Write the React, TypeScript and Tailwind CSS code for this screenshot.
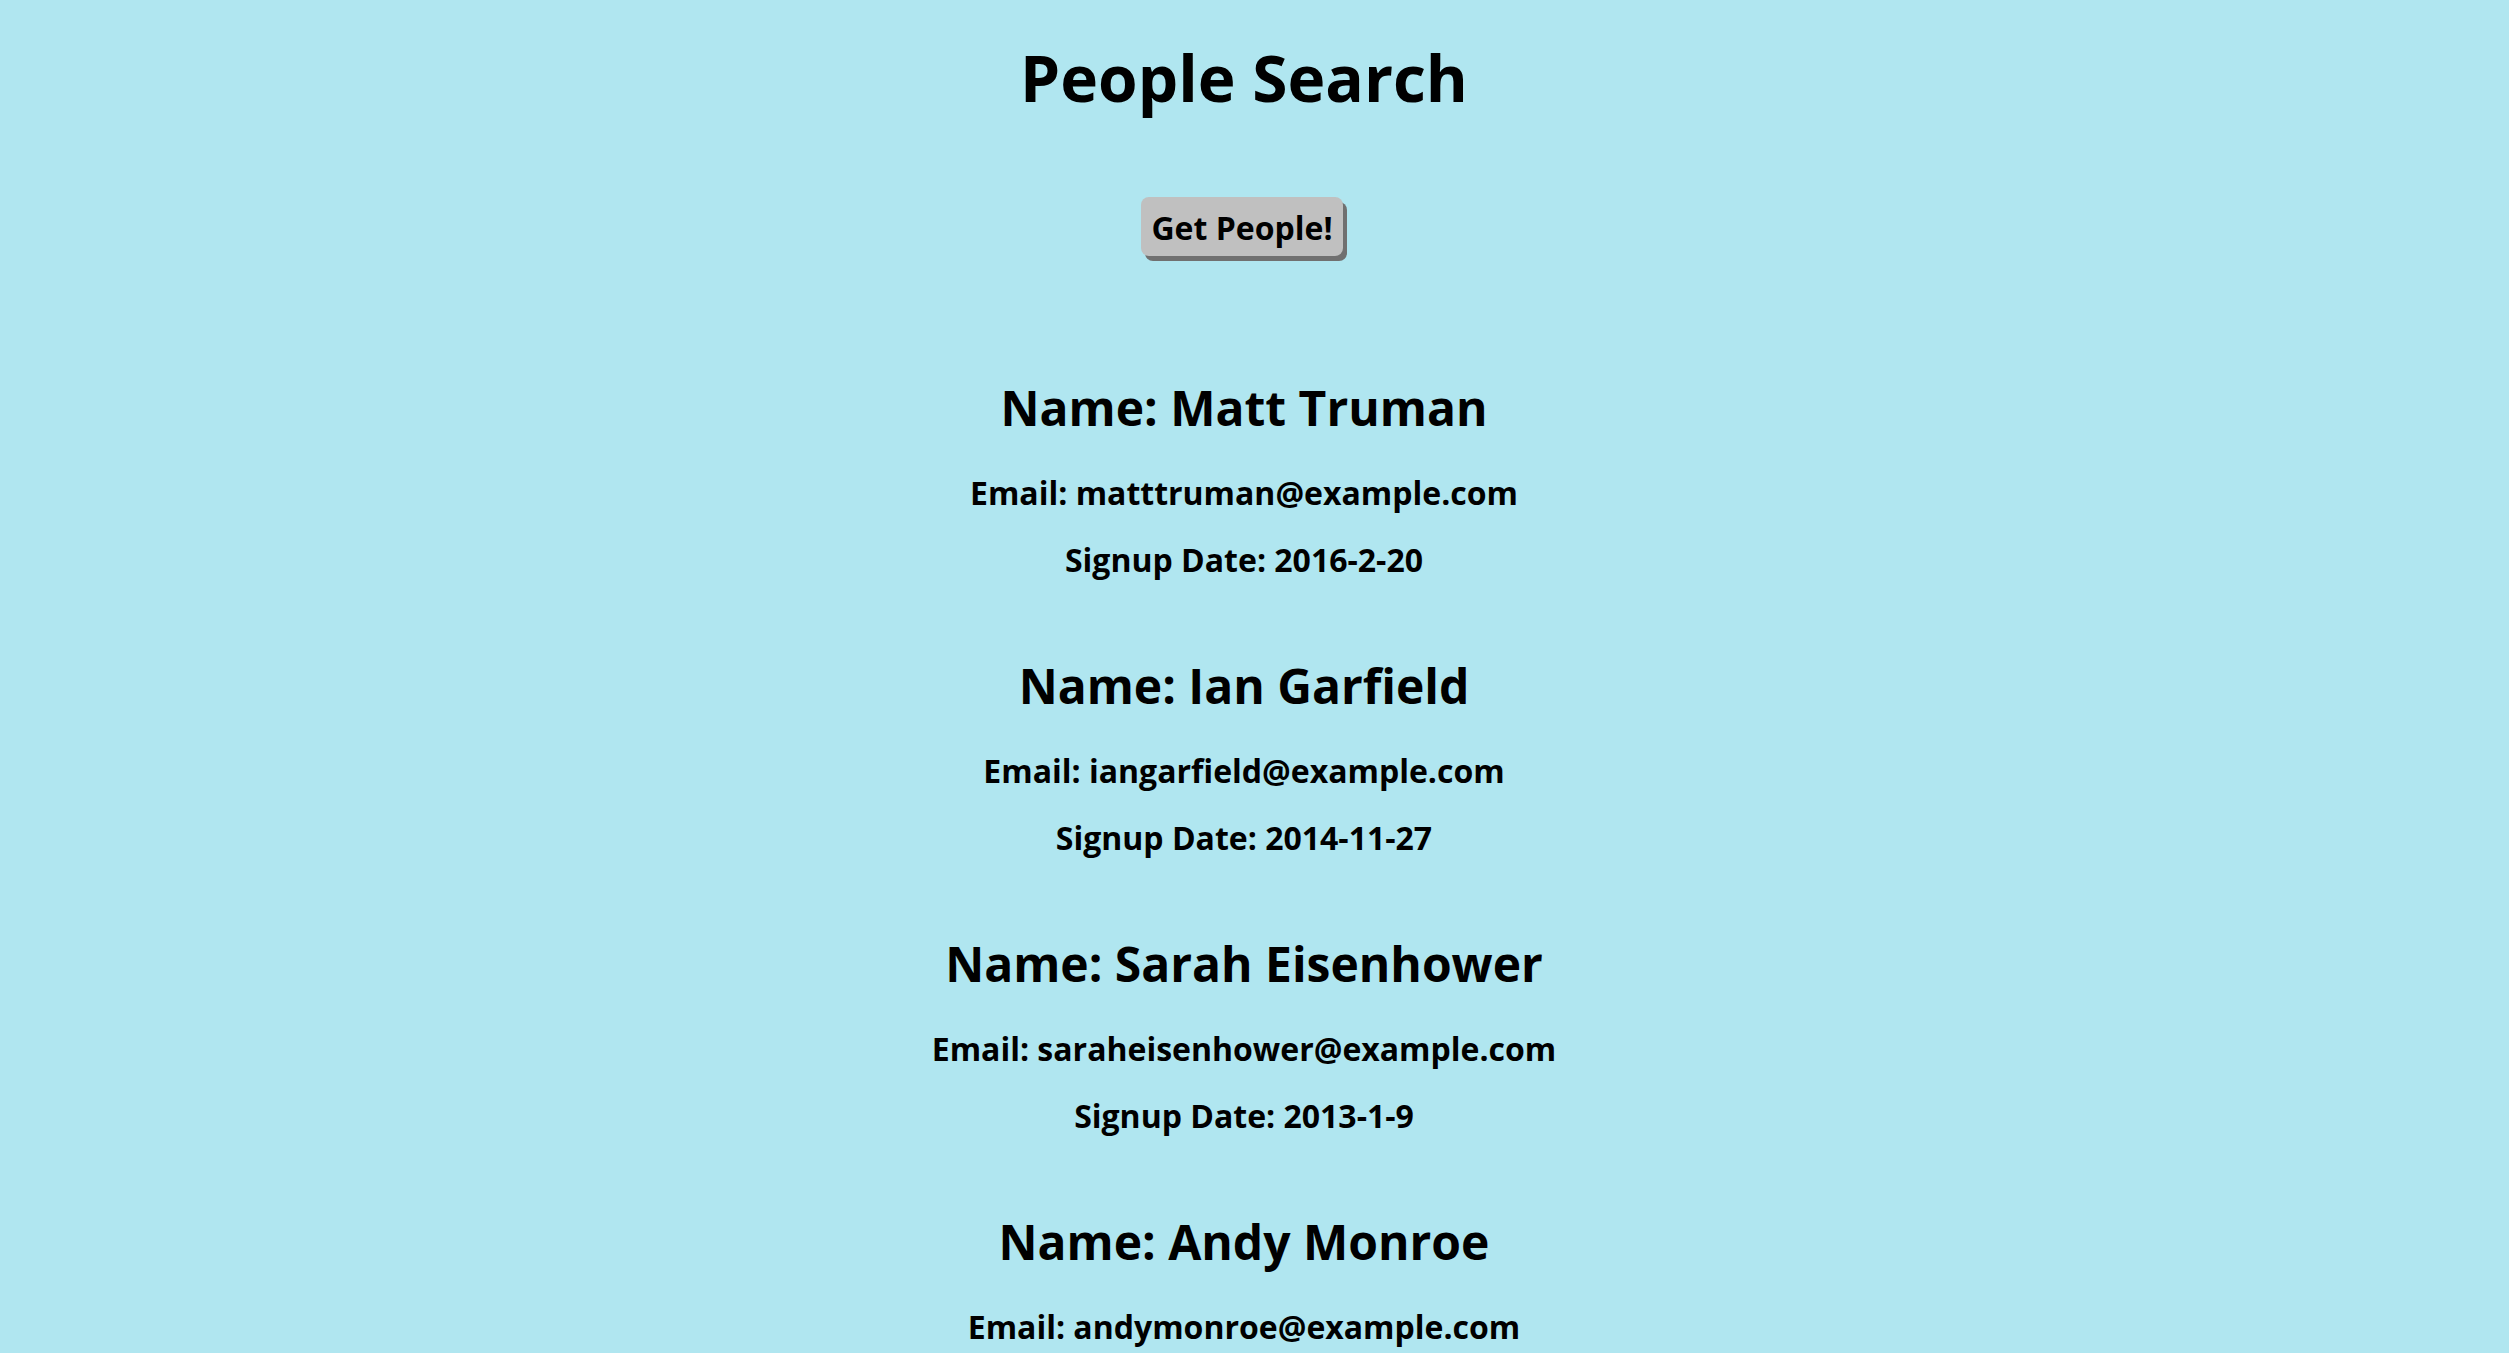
import React from 'react';

type Person = {
  name: string;
  email: string;
  signup: string;
};

const people: Person[] = [
  { name: 'Matt Truman', email: 'matttruman@example.com', signup: '2016-2-20' },
  { name: 'Ian Garfield', email: 'iangarfield@example.com', signup: '2014-11-27' },
  { name: 'Sarah Eisenhower', email: 'saraheisenhower@example.com', signup: '2013-1-9' },
  { name: 'Andy Monroe', email: 'andymonroe@example.com', signup: '2015-6-14' },
];

export default function App() {
  return (
    <div className="min-h-screen bg-[#b0e6f0] text-black font-['Open_Sans','Noto_Sans',sans-serif] font-bold pr-[21px] pb-20 flex flex-col items-center">
      <h1 className="mt-[46px] text-[64px] leading-none font-bold">People Search</h1>

      <button className="mt-[87px] mr-[4px] h-[59px] w-[202px] pt-[2px] flex items-center justify-center whitespace-nowrap rounded-[8px] bg-[#c0c0c0] shadow-[4px_5px_0_#707070] text-[32px] leading-none font-bold">
        Get People!
      </button>

      <div className="mt-[128px] flex flex-col items-center">
        {people.map((p, i) => (
          <div key={p.email} className={`flex flex-col items-center ${i > 0 ? 'mt-[86px]' : ''}`}>
            <h2 className="text-[48px] leading-none font-bold">Name: {p.name}</h2>
            <p className="mt-[45px] text-[32px] leading-none">Email: {p.email}</p>
            <p className="mt-[35px] text-[32px] leading-none">Signup Date: {p.signup}</p>
          </div>
        ))}
      </div>
    </div>
  );
}
